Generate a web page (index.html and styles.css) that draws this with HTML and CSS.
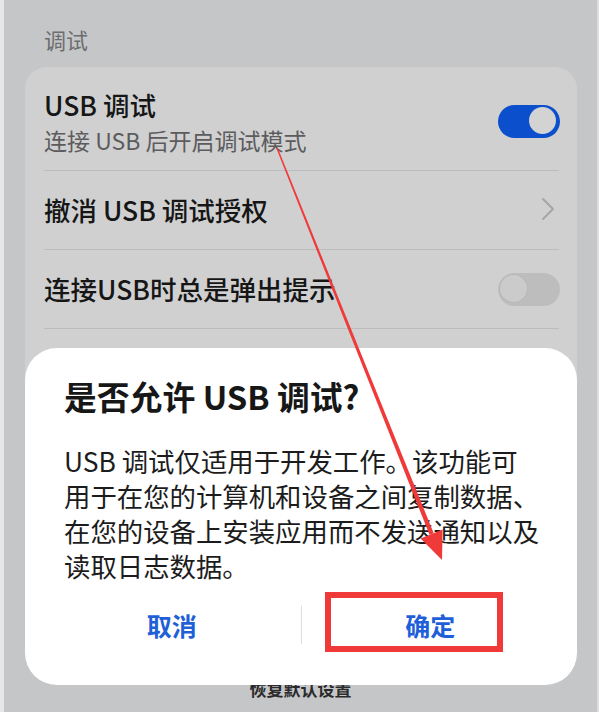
FILE: index.html
```html
<!DOCTYPE html>
<html lang="zh-CN">
<head>
<meta charset="utf-8">
<title>调试</title>
<link rel="stylesheet" href="styles.css">
</head>
<body>
<div class="device">
  <div class="edge-l"></div>
  <div class="screen">
    <div class="section-title">调试</div>
    <div class="card">
      <div class="row row-two">
        <div class="row-text">
          <div class="row-title">USB 调试</div>
          <div class="row-sub">连接 USB 后开启调试模式</div>
        </div>
        <div class="switch on"><span class="knob"></span></div>
      </div>
      <div class="row">
        <div class="row-text">
          <div class="row-title">撤消 USB 调试授权</div>
        </div>
        <svg class="chev" width="14" height="24" viewBox="0 0 14 24"><path d="M2 2 L12 12 L2 22" fill="none" stroke="#a6a6a7" stroke-width="2" stroke-linecap="round" stroke-linejoin="round"/></svg>
      </div>
      <div class="row">
        <div class="row-text">
          <div class="row-title">连接USB时总是弹出提示</div>
        </div>
        <div class="switch"><span class="knob"></span></div>
      </div>
      <div class="row row-four">
        <div class="row-text">
          <div class="row-title">选择 USB 配置</div>
        </div>
      </div>
    </div>
    <div class="footer">恢复默认设置</div>

    <div class="dialog">
      <div class="dlg-title">是否允许 USB 调试?</div>
      <p class="dlg-body">USB 调试仅适用于开发工作。该功能可<br>用于在您的计算机和设备之间复制数据、<br>在您的设备上安装应用而不发送通知以及<br>读取日志数据。</p>
      <div class="dlg-actions">
        <div class="dlg-btn">取消</div>
        <div class="dlg-sep"></div>
        <div class="dlg-btn">确定</div>
      </div>
      <div class="mark-box"></div>
    </div>
  </div>
  <div class="edge-r"></div>
  <svg class="annot" width="599" height="712" viewBox="0 0 599 712">
    <polygon points="277.7,147.7 276.3,148.3 429.5,534.8 433.7,533.2" fill="#f03a3a"/>
    <polygon points="442,560 442.6,529.6 420.6,538.4" fill="#f03a3a"/>
  </svg>
</div>
</body>
</html>
```

FILE: styles.css
```css
html, body {
  margin: 0;
  padding: 0;
}
body {
  width: 599px;
  height: 712px;
  overflow: hidden;
  font-family: "Noto Sans CJK SC", "Noto Sans", sans-serif;
}
.device {
  position: relative;
  display: flex;
  width: 599px;
  height: 712px;
  background: #c5c6c8;
}
.edge-l {
  width: 4px;
  background: #e6e7e9;
}
.edge-r {
  width: 2px;
  background: #dcdddf;
}
.screen {
  position: relative;
  flex: 1;
  display: flex;
  flex-direction: column;
  padding-top: 24px;
  box-sizing: border-box;
}
.section-title {
  padding-left: 40px;
  font-size: 22px;
  line-height: 30px;
  color: #6c6d6f;
}
.card {
  margin: 13px 20px 0 21px;
  padding: 0 18px 0 19px;
  background: #d0d0d1;
  border-radius: 22px;
}
.row {
  display: flex;
  align-items: center;
  box-sizing: border-box;
  min-height: 79px;
  border-bottom: 1px solid #bcbcbe;
}
.row-two {
  padding: 21px 0 15px;
}
.row-four {
  padding: 21px 0 12px;
  align-items: flex-start;
  border-bottom: none;
}
.row-text {
  flex: 1;
}
.row-title {
  font-size: 26.5px;
  line-height: 34px;
  font-weight: 500;
  color: #161616;
}
.row-sub {
  margin-top: 3px;
  font-size: 23px;
  line-height: 30px;
  color: #5c5c5e;
}
.switch {
  position: relative;
  width: 62px;
  height: 33px;
  border-radius: 17px;
  background: #bdbdbe;
  margin-right: -1px;
}
.switch .knob {
  position: absolute;
  left: 2px;
  top: 2px;
  width: 27px;
  height: 27px;
  border-radius: 50%;
  background: #cbcbcc;
  box-shadow: 0 0 0 1px #b8b8b9;
}
.switch.on {
  background: #0b4fcc;
}
.switch.on .knob {
  left: 31px;
  background: #d3d3d4;
  box-shadow: none;
}
.chev {
  margin-right: 4px;
  margin-top: -2px;
}
.footer {
  margin-top: auto;
  padding-bottom: 11px;
  text-align: center;
  font-size: 17px;
  line-height: 24px;
  font-weight: 700;
  color: #2a2a2b;
}
.dialog {
  position: absolute;
  left: 21px;
  top: 348px;
  width: 552px;
  height: 337px;
  box-sizing: border-box;
  padding: 28px 0 0 39px;
  background: #ffffff;
  border-radius: 32px;
}
.dlg-title {
  font-size: 32.8px;
  line-height: 40px;
  font-weight: 600;
  color: #171717;
}
.dlg-body {
  margin: 27px 0 0;
  font-size: 26.4px;
  line-height: 35px;
  color: #1c1c1c;
}
.dlg-actions {
  display: flex;
  align-items: center;
  height: 56px;
  margin: 14px 0 0 -21px;
  width: 516px;
}
.dlg-btn {
  flex: 1;
  text-align: center;
  font-size: 25px;
  line-height: 34px;
  font-weight: 700;
  color: #1f5fd8;
}
.dlg-sep {
  width: 1px;
  height: 38px;
  background: #dedede;
}
.mark-box {
  position: absolute;
  left: 300px;
  top: 244px;
  width: 178px;
  height: 60px;
  box-sizing: border-box;
  border: 6px solid #f03a3a;
}
.annot {
  position: absolute;
  left: 0;
  top: 0;
  pointer-events: none;
}
```
